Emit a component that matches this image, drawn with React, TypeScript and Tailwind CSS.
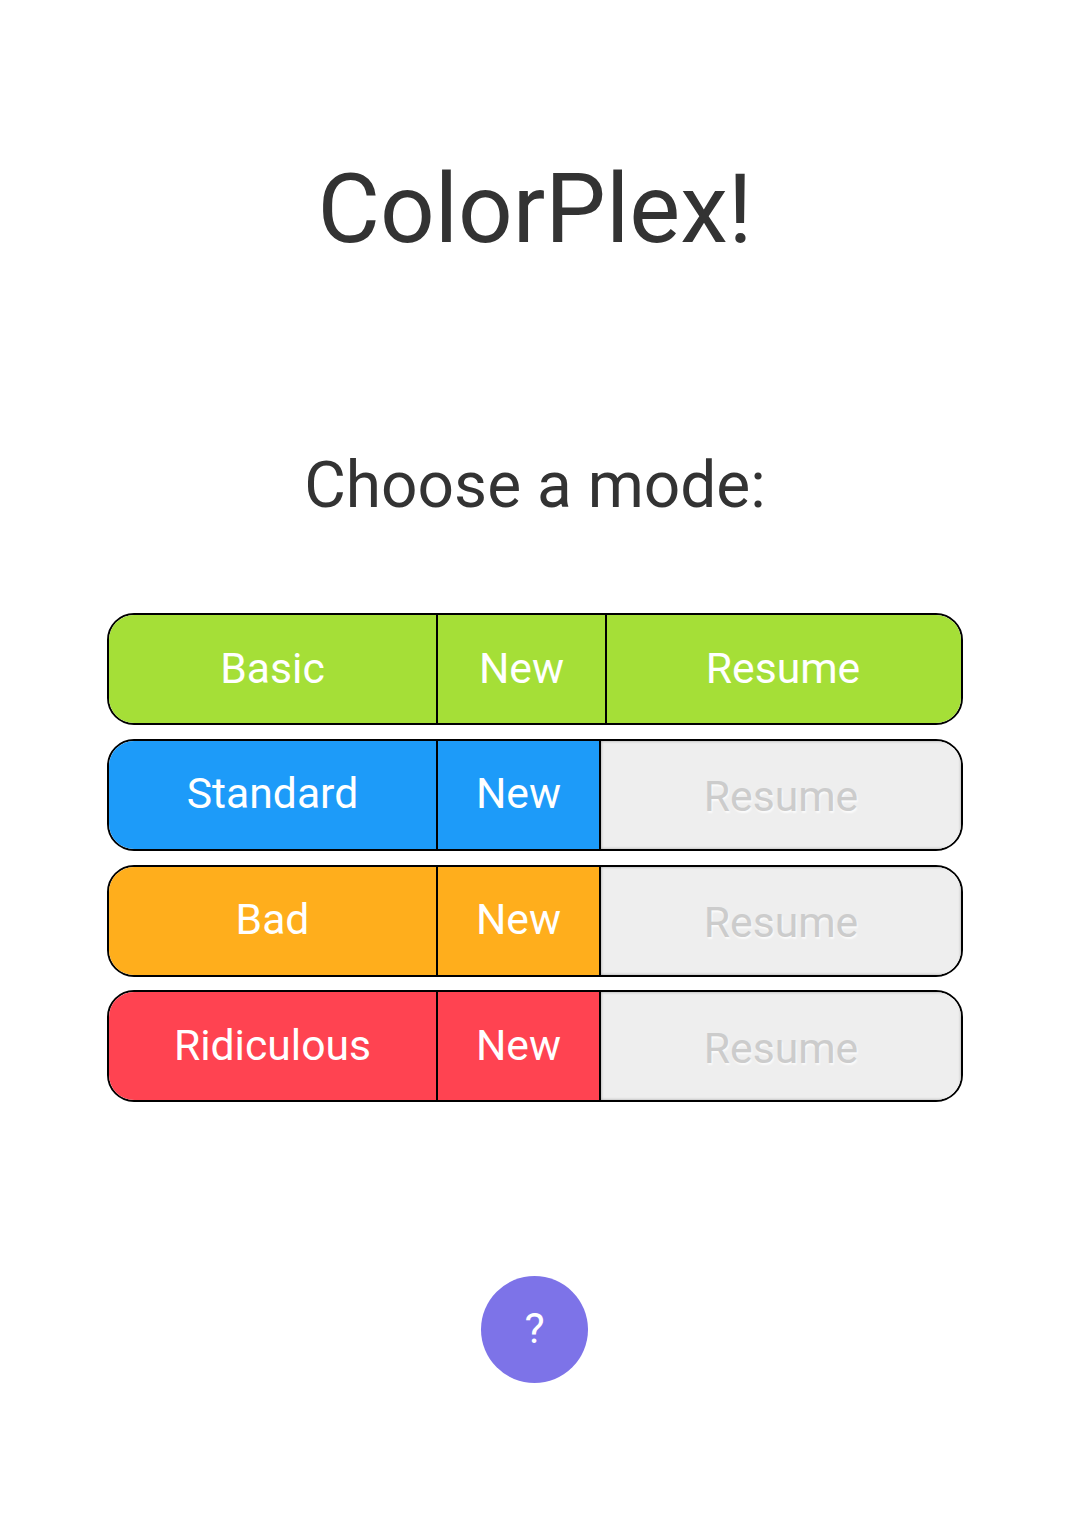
import clsx from "clsx";

type Mode = {
  name: string;
  color: string;
  canResume: boolean;
};

const modes: Mode[] = [
  { name: "Basic", color: "bg-[#a5df37]", canResume: true },
  { name: "Standard", color: "bg-[#1d9bf9]", canResume: false },
  { name: "Bad", color: "bg-[#ffae1c]", canResume: false },
  { name: "Ridiculous", color: "bg-[#ff4351]", canResume: false },
];

function ModeRow({ name, color, canResume }: Mode) {
  return (
    <div className="flex h-[112px] overflow-hidden rounded-[27px] border-2 border-black text-[42.67px] leading-[50px] text-white">
      <div className={clsx("flex w-[329px] items-center justify-center border-r-2 border-black pb-[3px]", color)}>{name}</div>
      <button className={clsx("flex items-center justify-center border-r-2 border-black pb-[3px]", color, canResume ? "w-[169px]" : "w-[163px]")}>
        New
      </button>
      {canResume ? (
        <button className={clsx("flex flex-1 items-center justify-center pr-0.5 pb-[3px]", color)}>Resume</button>
      ) : (
        <button
          disabled
          className="flex flex-1 items-center justify-center bg-[#eeeeee] pt-[3px] text-[#cccccc] shadow-[inset_0_0_3px_rgba(0,0,0,0.35)] [text-shadow:1px_2px_2px_rgba(255,255,255,0.8)]"
        >
          Resume
        </button>
      )}
    </div>
  );
}

export default function App() {
  return (
    <main className="flex min-h-[1515px] flex-col items-center bg-white pl-[3px] font-[Roboto,sans-serif] text-[#333333]">
      <h1 className="mt-[151px] text-[96px] leading-[116px]">ColorPlex!</h1>
      <h2 className="mt-[181px] text-[64px] leading-[75px]">Choose a mode:</h2>
      <div className="mt-[90.3px] flex w-[856px] flex-col gap-[13.7px]">
        {modes.map((mode) => (
          <ModeRow key={mode.name} {...mode} />
        ))}
      </div>
      <button className="mt-[173.6px] mr-px flex size-[107px] items-center justify-center rounded-full bg-[#7d73e8] pb-[3px] text-[42.67px] leading-[50px] text-white">
        ?
      </button>
    </main>
  );
}
